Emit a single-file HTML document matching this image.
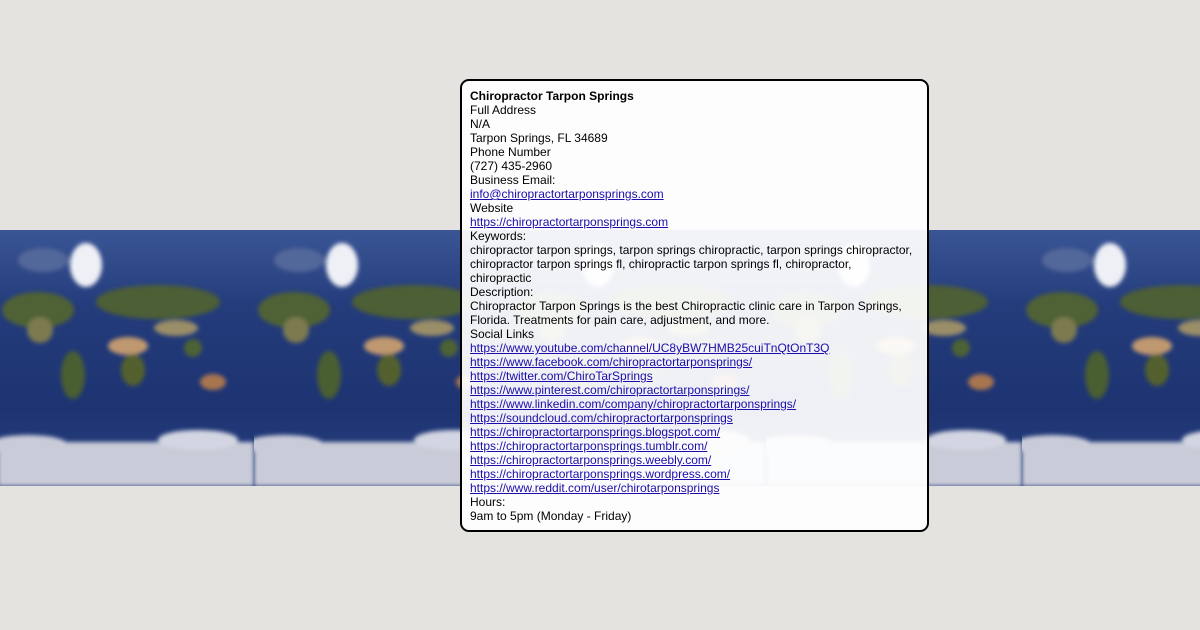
<!DOCTYPE html>
<html><head><meta charset="utf-8"><style>
html,body{margin:0;padding:0}
body{width:1200px;height:630px;background:#e4e3df;position:relative;overflow:hidden;font-family:"Liberation Sans",Arial,sans-serif}
#map{position:absolute;left:0;top:230px;width:1200px;height:256px}
#box{position:absolute;left:460px;top:79px;width:445px;border:2px solid #000;border-radius:9px;background:rgba(255,255,255,0.93);padding:8px 12px 7px 8px;font-size:12px;line-height:14px;color:#000}
a{color:#1a0dab;text-decoration:underline}
</style></head><body>
<svg id="map" width="1200" height="256" xmlns="http://www.w3.org/2000/svg">
<defs>
<linearGradient id="sea" x1="0" y1="0" x2="0" y2="1">
<stop offset="0" stop-color="#3a5595"/><stop offset="0.3" stop-color="#243c7b"/><stop offset="0.7" stop-color="#1d3372"/><stop offset="1" stop-color="#2a4280"/>
</linearGradient>
<filter id="b"><feGaussianBlur stdDeviation="2"/></filter>
<pattern id="p" x="-2" y="0" width="256" height="256" patternUnits="userSpaceOnUse">
<rect width="256" height="256" fill="url(#sea)"/>
<g filter="url(#b)">
<ellipse cx="45" cy="30" rx="25" ry="12" fill="#52679a"/>
<ellipse cx="88" cy="35" rx="16" ry="22" fill="#eef0f5"/>
<ellipse cx="40" cy="80" rx="36" ry="18" fill="#4f6236"/>
<ellipse cx="42" cy="100" rx="13" ry="13" fill="#7d7a50"/>
<ellipse cx="75" cy="145" rx="12" ry="24" fill="#4a5f30"/>
<ellipse cx="160" cy="72" rx="62" ry="17" fill="#4e5e35"/>
<ellipse cx="178" cy="98" rx="22" ry="8" fill="#9a8e68"/>
<ellipse cx="130" cy="116" rx="20" ry="9" fill="#bf9870"/>
<ellipse cx="135" cy="140" rx="12" ry="16" fill="#52602f"/>
<ellipse cx="215" cy="152" rx="13" ry="8" fill="#a87450"/>
<ellipse cx="195" cy="118" rx="9" ry="9" fill="#4d6236"/>
<rect x="0" y="212" width="256" height="44" fill="#c9ccd8"/>
<ellipse cx="30" cy="215" rx="40" ry="10" fill="#c9ccd8"/>
<ellipse cx="200" cy="210" rx="40" ry="10" fill="#d3d6e2"/>
</g>
</pattern>
</defs>
<rect width="1200" height="256" fill="url(#p)"/>
</svg>
<div id="box">
<b>Chiropractor Tarpon Springs</b><br>
Full Address<br>N/A<br>Tarpon Springs, FL 34689<br>Phone Number<br>(727) 435-2960<br>Business Email:<br>
<a>info@chiropractortarponsprings.com</a><br>Website<br><a>https://chiropractortarponsprings.com</a><br>
Keywords:<br>chiropractor tarpon springs, tarpon springs chiropractic, tarpon springs chiropractor, chiropractor tarpon springs fl, chiropractic tarpon springs fl, chiropractor,<br>chiropractic<br>
Description:<br>Chiropractor Tarpon Springs is the best Chiropractic clinic care in Tarpon Springs, Florida. Treatments for pain care, adjustment, and more.<br>
Social Links<br>
<a>https://www.youtube.com/channel/UC8yBW7HMB25cuiTnQtOnT3Q</a><br>
<a>https://www.facebook.com/chiropractortarponsprings/</a><br>
<a>https://twitter.com/ChiroTarSprings</a><br>
<a>https://www.pinterest.com/chiropractortarponsprings/</a><br>
<a>https://www.linkedin.com/company/chiropractortarponsprings/</a><br>
<a>https://soundcloud.com/chiropractortarponsprings</a><br>
<a>https://chiropractortarponsprings.blogspot.com/</a><br>
<a>https://chiropractortarponsprings.tumblr.com/</a><br>
<a>https://chiropractortarponsprings.weebly.com/</a><br>
<a>https://chiropractortarponsprings.wordpress.com/</a><br>
<a>https://www.reddit.com/user/chirotarponsprings</a><br>
Hours:<br>9am to 5pm (Monday - Friday)
</div>
</body></html>
